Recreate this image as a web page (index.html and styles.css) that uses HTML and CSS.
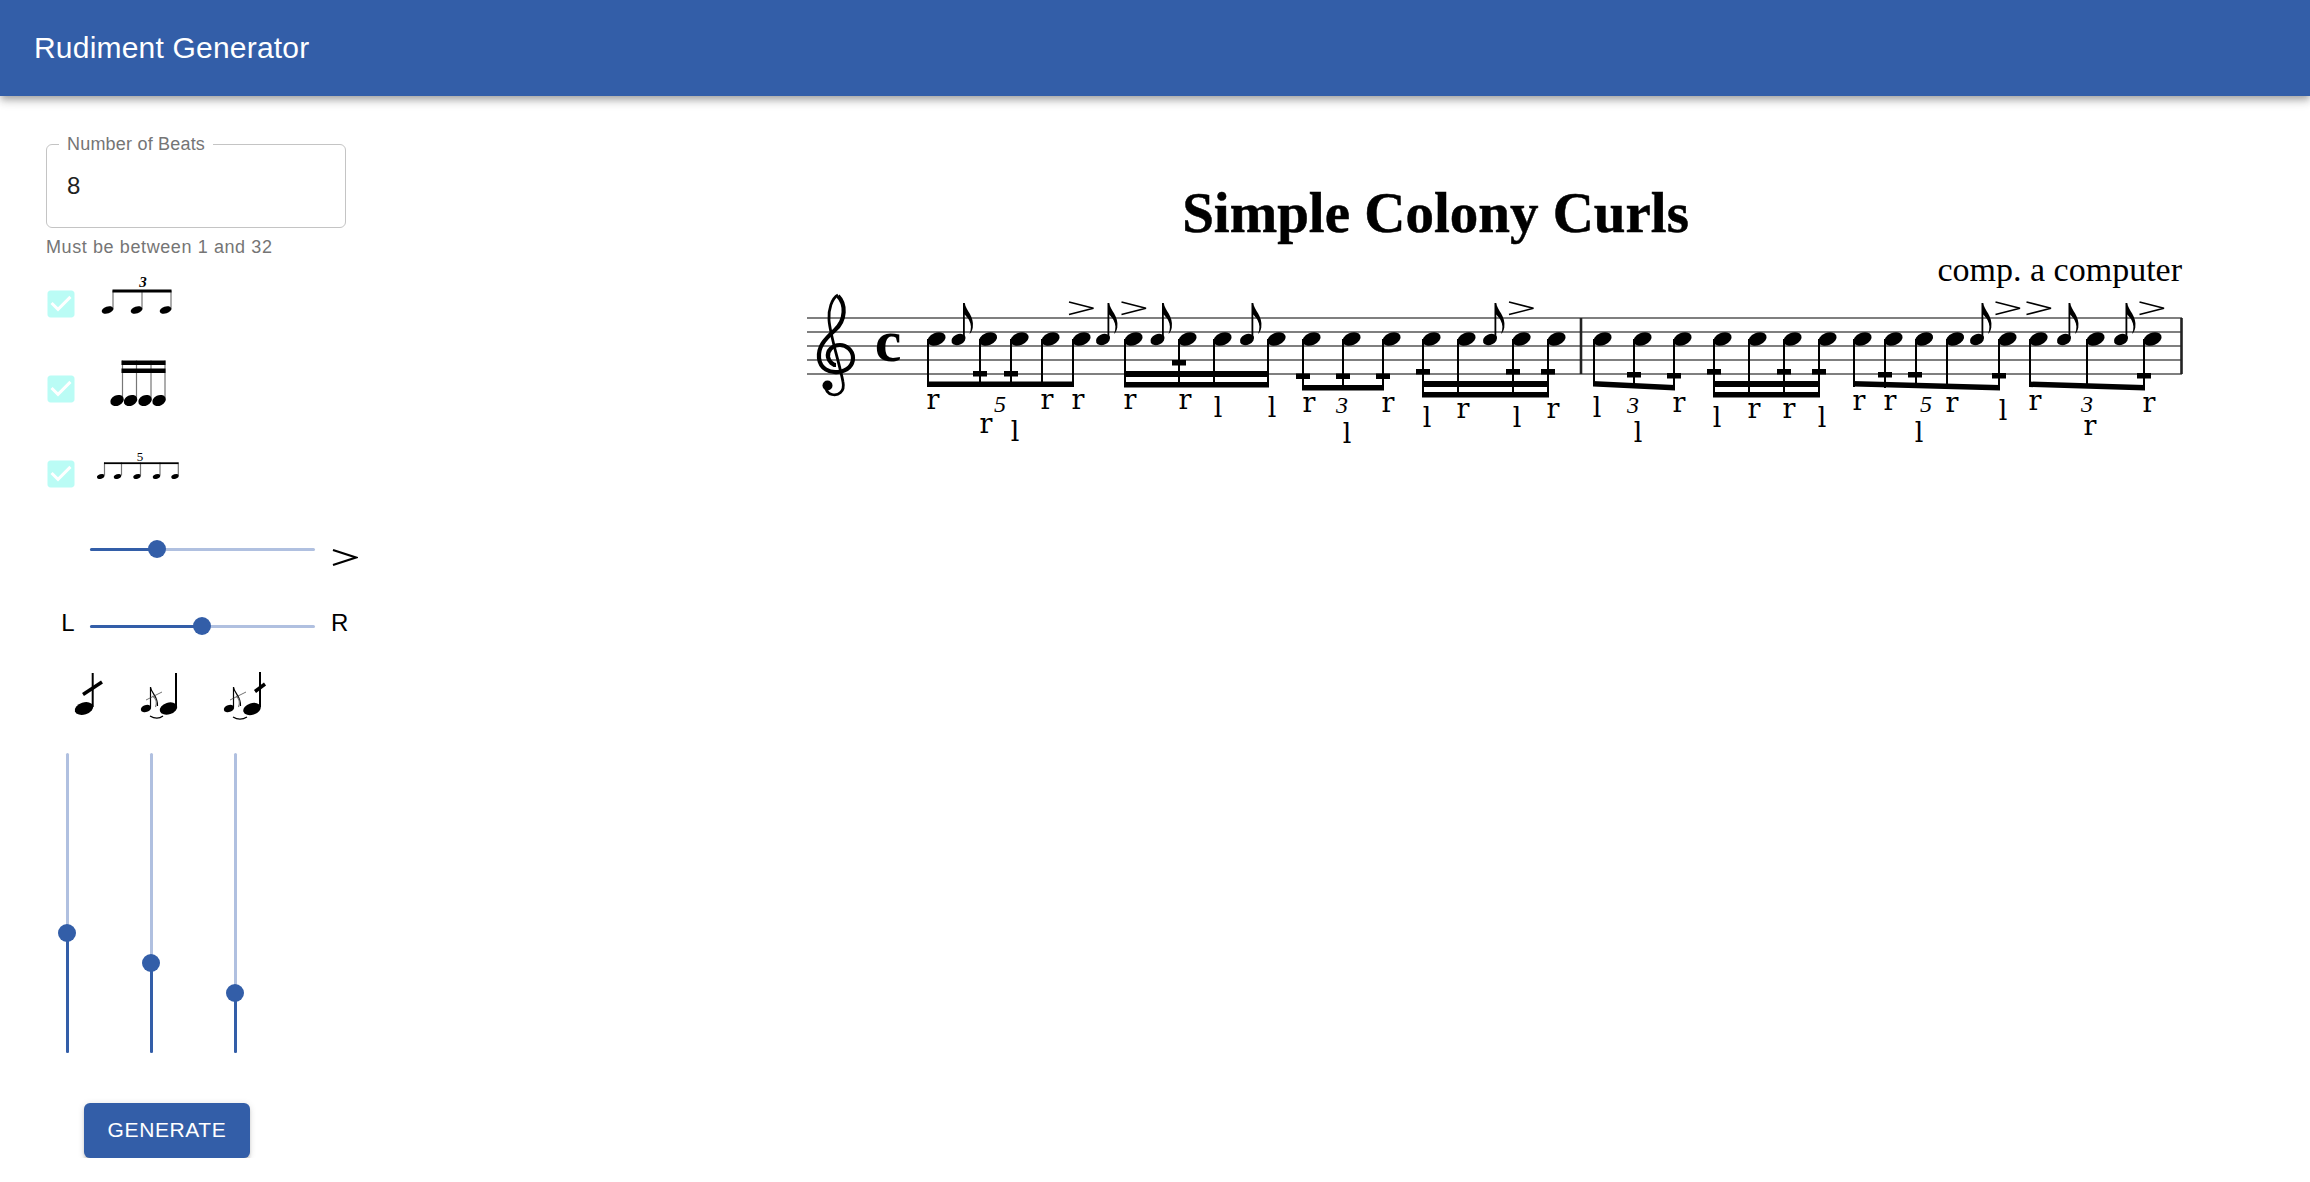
FILE: index.html
```html
<!DOCTYPE html>
<html lang="en">
<head>
    <meta charset="UTF-8">
    <meta name="viewport" content="width=device-width, initial-scale=1.0">
    <title>Rudiment Generator</title>
    <link rel="stylesheet" href="styles.css">
</head>
<body>
    <header class="app-bar">
        <h1>Rudiment Generator</h1>
    </header>

    <main class="layout">
        <form class="panel">
            <fieldset class="beats-field">
                <legend>Number of Beats</legend>
                <input type="text" name="beats" value="8">
            </fieldset>
            <p class="helper">Must be between 1 and 32</p>

            <!-- note groupings -->
            <div class="check-row">
                <svg class="check" viewBox="0 0 24 24"><path d="M19 3H5c-1.11 0-2 .9-2 2v14c0 1.1.89 2 2 2h14c1.1 0 2-.9 2-2V5c0-1.1-.9-2-2-2zm-9 14l-5-5 1.41-1.41L10 14.17l7.59-7.59L19 8l-9 9z"/></svg>
                <svg class="check-art" viewBox="90 262.5 130 85">
                    <text class="tuplet-small" x="143" y="288">3</text>
                    <path class="thin" d="M113 292V311M142 292V311M171 292V311"/>
                    <rect x="112.500" y="291" width="59" height="3"/>
                    <ellipse cx="107.500" cy="311.500" rx="6" ry="3.500" transform="rotate(-18 107.500 311.500)"/>
                    <ellipse cx="136.500" cy="311.500" rx="6" ry="3.500" transform="rotate(-18 136.500 311.500)"/>
                    <ellipse cx="165.500" cy="311.500" rx="6" ry="3.500" transform="rotate(-18 165.500 311.500)"/>
                </svg>
            </div>
            <div class="check-row">
                <svg class="check" viewBox="0 0 24 24"><path d="M19 3H5c-1.11 0-2 .9-2 2v14c0 1.1.89 2 2 2h14c1.1 0 2-.9 2-2V5c0-1.1-.9-2-2-2zm-9 14l-5-5 1.41-1.41L10 14.17l7.59-7.59L19 8l-9 9z"/></svg>
                <svg class="check-art" viewBox="90 347.500 130 85">
                    <path class="thin" d="M122.500 362V401M136.500 362V401M151 362V401M165 362V401"/>
                    <rect x="121.500" y="362" width="44" height="4.500"/>
                    <rect x="121.500" y="370" width="44" height="4.500"/>
                    <ellipse cx="117" cy="402" rx="7" ry="5.200" transform="rotate(-25 117 402)"/>
                    <ellipse cx="130.500" cy="402" rx="7" ry="5.200" transform="rotate(-25 130.500 402)"/>
                    <ellipse cx="145" cy="402" rx="7" ry="5.200" transform="rotate(-25 145 402)"/>
                    <ellipse cx="159" cy="402" rx="7" ry="5.200" transform="rotate(-25 159 402)"/>
                </svg>
            </div>
            <div class="check-row">
                <svg class="check" viewBox="0 0 24 24"><path d="M19 3H5c-1.11 0-2 .9-2 2v14c0 1.1.89 2 2 2h14c1.1 0 2-.9 2-2V5c0-1.1-.9-2-2-2zm-9 14l-5-5 1.41-1.41L10 14.17l7.59-7.59L19 8l-9 9z"/></svg>
                <svg class="check-art" viewBox="90 432.500 130 85">
                    <text class="tuplet-tiny" x="140" y="462">5</text>
                    <path class="thin" d="M104.500 464V477M121.500 464V477M140.500 464V477M160 464V477M178.300 464V477"/>
                    <rect x="104" y="463.800" width="74.500" height="1.800"/>
                    <ellipse cx="100.700" cy="478" rx="3.800" ry="2.300" transform="rotate(-18 100.700 478)"/>
                    <ellipse cx="117.500" cy="478" rx="3.800" ry="2.300" transform="rotate(-18 117.500 478)"/>
                    <ellipse cx="137" cy="478" rx="3.800" ry="2.300" transform="rotate(-18 137 478)"/>
                    <ellipse cx="156.500" cy="478" rx="3.800" ry="2.300" transform="rotate(-18 156.500 478)"/>
                    <ellipse cx="175" cy="478" rx="3.800" ry="2.300" transform="rotate(-18 175 478)"/>
                </svg>
            </div>

            <!-- accents -->
            <div class="slider-row first">
                <span class="slider-label"></span>
                <div class="slider">
                    <div class="slider-fill" style="width: 30%"></div>
                    <div class="slider-thumb" style="left: 30%"></div>
                </div>
                <svg class="accent-mark" viewBox="0 0 26 20"><path d="M1 2L24 9.500L1 17"/></svg>
            </div>

            <!-- sticking -->
            <div class="slider-row">
                <span class="slider-label">L</span>
                <div class="slider">
                    <div class="slider-fill" style="width: 50%"></div>
                    <div class="slider-thumb" style="left: 50%"></div>
                </div>
                <span class="slider-label end">R</span>
            </div>

            <!-- ornaments: buzz, flam, buzzed flam -->
            <div class="ornaments">
                <svg viewBox="46 665 84 65">
                    <ellipse cx="84" cy="709.500" rx="9.500" ry="6" transform="rotate(-18 84 709.500)"/>
                    <path class="stem" d="M92.700 708V674"/>
                    <path class="slash" d="M83 695.500L102 683"/>
                </svg>
                <svg viewBox="130 665 84 65">
                    <ellipse cx="146" cy="709.500" rx="5.300" ry="3.500" transform="rotate(-18 146 709.500)"/>
                    <path class="thin dark" d="M150.500 708V688C151 694 158 697 157.500 707"/>
                    <path class="hair" d="M146 701L162 693"/>
                    <path class="thin" d="M152.500 697C157 700 157 704 155.500 708"/>
                    <path class="slur" d="M150 717C155 720 159 720 163 717"/>
                    <ellipse cx="168.500" cy="709.500" rx="9" ry="5.800" transform="rotate(-18 168.500 709.500)"/>
                    <path class="stem" d="M176 708V674"/>
                </svg>
                <svg viewBox="214 665 84 65">
                    <ellipse cx="229" cy="709.500" rx="5.300" ry="3.500" transform="rotate(-18 229 709.500)"/>
                    <path class="thin dark" d="M233.500 708V688C234 694 241 697 240.500 707"/>
                    <path class="hair" d="M230 701L246 693"/>
                    <path class="thin" d="M236 697C240 700 240 704 238.500 708"/>
                    <path class="slur" d="M233 718C238 721 242 721 247 718"/>
                    <ellipse cx="252" cy="710" rx="9" ry="5.800" transform="rotate(-18 252 710)"/>
                    <path class="stem" d="M260 708V673"/>
                    <path class="slash" d="M255 692.500L265 685"/>
                </svg>
            </div>

            <div class="odds">
                <div class="vslider">
                    <div class="vslider-fill" style="height: 40%"></div>
                    <div class="slider-thumb" style="bottom: 40%"></div>
                </div>
                <div class="vslider">
                    <div class="vslider-fill" style="height: 30%"></div>
                    <div class="slider-thumb" style="bottom: 30%"></div>
                </div>
                <div class="vslider">
                    <div class="vslider-fill" style="height: 20%"></div>
                    <div class="slider-thumb" style="bottom: 20%"></div>
                </div>
            </div>

            <button type="button" class="generate">Generate</button>
        </form>

        <section class="score">
            <!-- viewBox uses page coordinates so the engraving can be read off the picture -->
            <svg width="1410" height="330" viewBox="790 130 1410 330">
                <defs>
                    <ellipse id="head" rx="9.500" ry="6.200" transform="rotate(-22)"/>
                    <rect id="buzz" x="-7" y="0" width="14" height="5.500"/>
                    <polyline id="accent" class="accent" points="0,0 24.500,6.300 0,12.600"/>
                    <g id="grace">
                        <ellipse rx="7.400" ry="5.300" transform="rotate(-25)"/>
                        <path d="M4.500 -36.500H6.300C7 -29 16 -24 14.300 -12C13.800 -9 12.800 -7 11 -5.500C13 -10.500 13 -15 10.500 -19.500C9 -22 7.500 -23.500 6.300 -25V-1H4.500Z"/>
                    </g>
                </defs>

                <text class="title" x="1435.500" y="232">Simple Colony Curls</text>
                <text class="composer" x="2182" y="281">comp. a computer</text>

                <!-- staff -->
                <path class="staff" d="M807 318H2182M807 332H2182M807 346H2182M807 360H2182M807 374H2182"/>
                <path class="barline" d="M1581 318V374M2181.500 318V374"/>

                <!-- clef and time -->
                <path class="clef-body" d="M838 296C846 304 846 320 835 330C824 340 818 347 819 358C820 369 830 373 838 372C848 371 853 365 853 358C853 350 846 345 840 345C832 345 827 351 828 357C829 362 833 365 836 365"/>
                <path class="clef-line" d="M838 295C832 298 828 310 829 320C830 335 840 365 843 382C845 392 838 396 832 394.500C828 393.500 825 390 826 386"/>
                <circle cx="827.500" cy="385.500" r="5"/>
                <text class="time" x="888" y="361">c</text>

                <!-- stems -->
                <path class="stem" d="M928 339V387M980 339V387M1011 339V387M1042 339V387M1073 339V387
                    M1125 339V387M1179 339V387M1214 339V387M1268 339V387
                    M1303 339V390M1343 339V390M1383 339V390
                    M1423 339V397M1458 339V397M1513 339V397M1548 339V397
                    M1594 339V386M1634 339V388M1674 339V390
                    M1714 339V397M1749 339V397M1784 339V397M1819 339V397
                    M1854 339V387M1885 339V388M1916 339V388M1947 339V389M1999 339V390
                    M2030 339V387M2087 339V388M2144 339V390"/>

                <!-- beams -->
                <rect x="927" y="381.500" width="147" height="5.500"/>
                <rect x="1124" y="371" width="145" height="6"/>
                <rect x="1124" y="382" width="145" height="5.500"/>
                <rect x="1302" y="385" width="82" height="5.500"/>
                <rect x="1422" y="381" width="127" height="6"/>
                <rect x="1422" y="392" width="127" height="5.500"/>
                <polygon points="1593,381 1675,385 1675,390.500 1593,386.500"/>
                <rect x="1713" y="381" width="107" height="6"/>
                <rect x="1713" y="392" width="107" height="5.500"/>
                <polygon points="1853,381 2000,385 2000,390.500 1853,386.500"/>
                <polygon points="2029,381.500 2145,385 2145,390.500 2029,387"/>

                <!-- buzz marks -->
                <use href="#buzz" x="980" y="371"/><use href="#buzz" x="1011" y="371"/>
                <use href="#buzz" x="1179" y="360"/>
                <use href="#buzz" x="1303" y="373.500"/><use href="#buzz" x="1343" y="373.500"/><use href="#buzz" x="1383" y="373.500"/>
                <use href="#buzz" x="1423" y="369"/><use href="#buzz" x="1513" y="369"/><use href="#buzz" x="1548" y="369"/>
                <use href="#buzz" x="1634" y="372"/><use href="#buzz" x="1674" y="373"/>
                <use href="#buzz" x="1714" y="369"/><use href="#buzz" x="1784" y="369"/><use href="#buzz" x="1819" y="369"/>
                <use href="#buzz" x="1885" y="372"/><use href="#buzz" x="1915" y="372"/><use href="#buzz" x="1999" y="373"/>
                <use href="#buzz" x="2144" y="373"/>

                <!-- noteheads -->
                <use href="#head" x="936.500" y="339"/><use href="#head" x="988" y="339"/><use href="#head" x="1019.500" y="339"/><use href="#head" x="1050.500" y="339"/><use href="#head" x="1081.500" y="339"/>
                <use href="#head" x="1133.500" y="339"/><use href="#head" x="1187.500" y="339"/><use href="#head" x="1222.500" y="339"/><use href="#head" x="1276.500" y="339"/>
                <use href="#head" x="1311.500" y="339"/><use href="#head" x="1351.500" y="339"/><use href="#head" x="1391.500" y="339"/>
                <use href="#head" x="1431.500" y="339"/><use href="#head" x="1466.500" y="339"/><use href="#head" x="1521.500" y="339"/><use href="#head" x="1556.500" y="339"/>
                <use href="#head" x="1602.500" y="339"/><use href="#head" x="1642.500" y="339"/><use href="#head" x="1682.500" y="339"/>
                <use href="#head" x="1722.500" y="339"/><use href="#head" x="1757.500" y="339"/><use href="#head" x="1792.500" y="339"/><use href="#head" x="1827.500" y="339"/>
                <use href="#head" x="1862.500" y="339"/><use href="#head" x="1893.500" y="339"/><use href="#head" x="1924" y="339"/><use href="#head" x="1955" y="339"/><use href="#head" x="2007.500" y="339"/>
                <use href="#head" x="2038.500" y="339"/><use href="#head" x="2095.500" y="339"/><use href="#head" x="2152.500" y="339"/>

                <!-- grace notes -->
                <use href="#grace" x="958.500" y="339.500"/><use href="#grace" x="1103" y="339.500"/><use href="#grace" x="1157.500" y="339.500"/><use href="#grace" x="1247" y="339.500"/>
                <use href="#grace" x="1490" y="339.500"/><use href="#grace" x="1977" y="339.500"/><use href="#grace" x="2064" y="339.500"/><use href="#grace" x="2121" y="339.500"/>

                <!-- accents -->
                <use href="#accent" x="1069" y="302"/><use href="#accent" x="1121.500" y="302"/><use href="#accent" x="1509" y="302"/>
                <use href="#accent" x="1995.500" y="302"/><use href="#accent" x="2026.500" y="302"/><use href="#accent" x="2139.500" y="302"/>

                <!-- sticking -->
                <g class="stick">
                    <text x="933" y="409">r</text><text x="986" y="433">r</text><text x="1015" y="441">l</text><text x="1047" y="409">r</text><text x="1078" y="409">r</text>
                    <text x="1130" y="409">r</text><text x="1185" y="409">r</text><text x="1218" y="417">l</text><text x="1272" y="417">l</text>
                    <text x="1309" y="412">r</text><text x="1347" y="443">l</text><text x="1388" y="412">r</text>
                    <text x="1427" y="427">l</text><text x="1463" y="418">r</text><text x="1517" y="427">l</text><text x="1553" y="418">r</text>
                    <text x="1597" y="417">l</text><text x="1638" y="442">l</text><text x="1679" y="412">r</text>
                    <text x="1717" y="427">l</text><text x="1754" y="418">r</text><text x="1789" y="418">r</text><text x="1822" y="427">l</text>
                    <text x="1859" y="410">r</text><text x="1890" y="410">r</text><text x="1919" y="442">l</text><text x="1952" y="412">r</text><text x="2003" y="420">l</text>
                    <text x="2035" y="410">r</text><text x="2090" y="435">r</text><text x="2149" y="412">r</text>
                </g>

                <!-- tuplet numbers -->
                <g class="tuplet">
                    <text x="1000" y="412">5</text><text x="1342" y="413">3</text><text x="1633" y="413">3</text><text x="1926" y="412">5</text><text x="2087" y="412">3</text>
                </g>
            </svg>
        </section>
    </main>
</body>
</html>
```

FILE: styles.css
```css
* {
    box-sizing: border-box;
    margin: 0;
    padding: 0;
}

body {
    font-family: "Liberation Sans", Arial, sans-serif;
    background: #ffffff;
    color: #000000;
}

.app-bar {
    display: flex;
    align-items: center;
    height: 96px;
    padding: 0 34px;
    background-color: #335ea8;
    color: #ffffff;
    box-shadow: 0 3px 6px -1.5px rgba(0, 0, 0, 0.2), 0 6px 7.5px rgba(0, 0, 0, 0.14), 0 1.5px 15px rgba(0, 0, 0, 0.12);
}

.app-bar h1 {
    font-size: 30px;
    font-weight: 400;
    letter-spacing: 0.2px;
}

.layout {
    display: flex;
}

.panel {
    flex: none;
    width: 400px;
    padding: 38px 0 0 46px;
}

.beats-field {
    width: 300px;
    height: 94px;
    padding: 0 20px;
    border: 1.5px solid #c4c4c4;
    border-radius: 6px;
}

.beats-field legend {
    margin-left: -8px;
    padding: 0 8px;
    font-size: 18px;
    line-height: 20px;
    letter-spacing: 0.2px;
    color: #757575;
}

.beats-field input {
    display: block;
    width: 100%;
    height: 64px;
    border: none;
    outline: none;
    font-family: inherit;
    font-size: 24px;
    color: #212121;
}

.helper {
    margin-top: 6px;
    font-size: 18px;
    line-height: 27px;
    letter-spacing: 0.6px;
    color: #757575;
}

.check-row {
    display: flex;
    align-items: center;
    gap: 11px;
    height: 85px;
    margin-left: -3px;
}

.check {
    width: 36px;
    height: 36px;
    fill: #baFCF5;
}

.check-art {
    width: 130px;
    height: 85px;
}

.thin {
    fill: none;
    stroke: #777;
    stroke-width: 1.2;
}

.thin.dark {
    stroke: #000;
}

.hair {
    fill: none;
    stroke: #333;
    stroke-width: 0.7;
}

.slur {
    fill: none;
    stroke: #000;
    stroke-width: 1.3;
}

.slash {
    fill: none;
    stroke: #000;
    stroke-width: 3.5;
}

.tuplet-small {
    font-family: "Liberation Serif", serif;
    font-size: 15px;
    font-style: italic;
    font-weight: 700;
    text-anchor: middle;
}

.tuplet-tiny {
    font-family: "Liberation Serif", serif;
    font-size: 13px;
    text-anchor: middle;
}

.slider-row {
    display: flex;
    align-items: center;
    height: 60px;
    margin-bottom: 17px;
}

.slider-row.first {
    margin-top: 3px;
}

.slider-label {
    flex: none;
    width: 44px;
    margin-bottom: 7px;
    font-size: 24px;
    text-align: center;
}

.slider-label.end {
    margin-left: 16px;
    text-align: left;
}

.slider {
    position: relative;
    flex: none;
    width: 225px;
    height: 3px;
    border-radius: 2px;
    background-color: #b0c0e0;
}

.slider-fill {
    height: 100%;
    border-radius: 2px;
    background-color: #335ea8;
}

.slider-thumb {
    position: absolute;
    width: 18px;
    height: 18px;
    border-radius: 50%;
    background-color: #335ea8;
}

.slider .slider-thumb {
    top: -7.5px;
    margin-left: -10px;
}

.accent-mark {
    flex: none;
    width: 26px;
    height: 20px;
    margin: 18px 0 0 17px;
    fill: none;
    stroke: #000;
    stroke-width: 2.2;
}

.ornaments {
    display: flex;
    height: 65px;
    margin-top: -9px;
}

.ornaments svg {
    width: 84px;
    height: 65px;
}

.stem {
    fill: none;
    stroke: #000;
    stroke-width: 2;
}

.odds {
    display: flex;
    gap: 81px;
    margin: 24px 0 0 20px;
}

.vslider {
    position: relative;
    display: flex;
    align-items: flex-end;
    width: 3px;
    height: 300px;
    border-radius: 2px;
    background-color: #b0c0e0;
}

.vslider-fill {
    width: 100%;
    border-radius: 2px;
    background-color: #335ea8;
}

.vslider .slider-thumb {
    left: -8px;
    margin-bottom: -9px;
}

.generate {
    display: block;
    width: 166px;
    height: 55px;
    margin: 50px 0 0 38px;
    padding-bottom: 2px;
    border: none;
    border-radius: 6px;
    background-color: #335ea8;
    color: #ffffff;
    font-family: inherit;
    font-size: 21px;
    letter-spacing: 0.6px;
    text-transform: uppercase;
    cursor: pointer;
    box-shadow: 0 4.5px 1.5px -3px rgba(0, 0, 0, 0.2), 0 3px 3px rgba(0, 0, 0, 0.14), 0 1.5px 7.5px rgba(0, 0, 0, 0.12);
}

.score {
    padding: 34px 0 0 390px;
}

.score svg {
    display: block;
}

.title {
    font-family: "Liberation Serif", serif;
    font-size: 57px;
    font-weight: 700;
    text-anchor: middle;
    stroke: #000;
    stroke-width: 0.5;
}

.composer {
    font-family: "Liberation Serif", serif;
    font-size: 34px;
    text-anchor: end;
}

.staff {
    fill: none;
    stroke: #555;
    stroke-width: 1.4;
}

.barline {
    fill: none;
    stroke: #222;
    stroke-width: 2.6;
}

.clef-body {
    fill: none;
    stroke: #000;
    stroke-width: 4.2;
}

.clef-line {
    fill: none;
    stroke: #000;
    stroke-width: 2.8;
}

.time {
    font-family: "Liberation Serif", serif;
    font-size: 60px;
    font-weight: 700;
    text-anchor: middle;
}

.accent {
    fill: none;
    stroke: #000;
    stroke-width: 1.6;
}

.stick {
    font-family: "DejaVu Serif", serif;
    font-size: 27px;
    text-anchor: middle;
}

.tuplet {
    font-family: "Liberation Serif", serif;
    font-size: 24px;
    font-style: italic;
    text-anchor: middle;
}
```
